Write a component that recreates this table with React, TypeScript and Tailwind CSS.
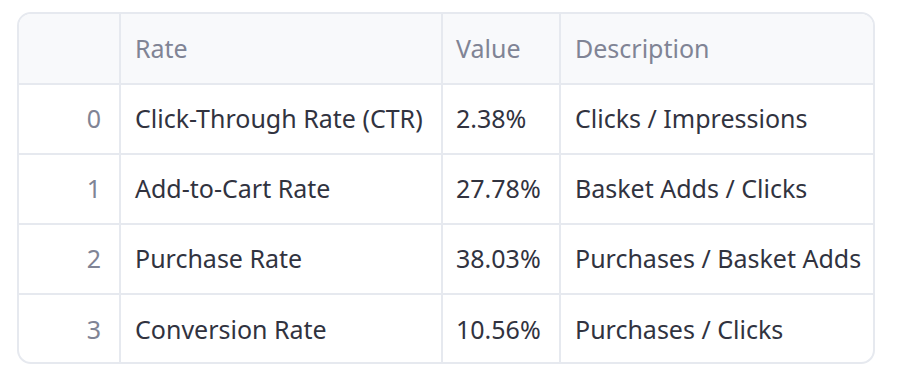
import React from 'react';

const rows = [
    { rate: 'Click-Through Rate (CTR)', value: '2.38%', description: 'Clicks / Impressions' },
    { rate: 'Add-to-Cart Rate', value: '27.78%', description: 'Basket Adds / Clicks' },
    { rate: 'Purchase Rate', value: '38.03%', description: 'Purchases / Basket Adds' },
    { rate: 'Conversion Rate', value: '10.56%', description: 'Purchases / Clicks' },
];

export default function App() {
    return (
        <div className="w-[898px] h-[380px] bg-white pt-[12px] pl-[17px]" style={{ fontFamily: '"Noto Sans", sans-serif' }}>
            <div className="w-[858px] h-[352px] border-2 border-[#e6e9ef] rounded-[14px] overflow-hidden text-[25px] text-[#31333f]">
                <div className="grid grid-cols-[102px_322px_118px_1fr] h-[71px] bg-[#f8f9fb] border-b-2 border-[#e6e9ef] text-[#808495]">
                    <div className="border-r-2 border-[#e6e9ef]" />
                    <div className="border-r-2 border-[#e6e9ef] flex items-center pl-[14px]">Rate</div>
                    <div className="border-r-2 border-[#e6e9ef] flex items-center pl-[13px]">Value</div>
                    <div className="flex items-center pl-[14px]">Description</div>
                </div>
                {rows.map((r, i) => (
                    <div key={i} className={`grid grid-cols-[102px_322px_118px_1fr] h-[70px] ${i < rows.length - 1 ? 'border-b-2 border-[#e6e9ef]' : ''}`}>
                        <div className="border-r-2 border-[#e6e9ef] flex items-center justify-end pr-[18px] text-[#808495]">{i}</div>
                        <div className="border-r-2 border-[#e6e9ef] flex items-center pl-[14px]">{r.rate}</div>
                        <div className="border-r-2 border-[#e6e9ef] flex items-center pl-[13px]">{r.value}</div>
                        <div className="flex items-center pl-[14px]">{r.description}</div>
                    </div>
                ))}
            </div>
        </div>
    );
}
